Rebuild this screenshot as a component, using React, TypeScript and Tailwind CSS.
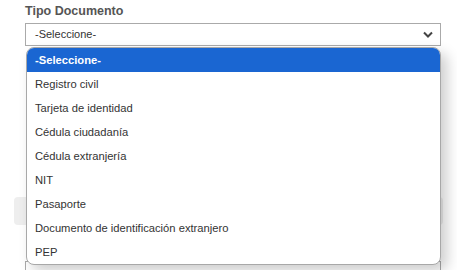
import React from "react";

const options = [
  "-Seleccione-",
  "Registro civil",
  "Tarjeta de identidad",
  "Cédula ciudadanía",
  "Cédula extranjería",
  "NIT",
  "Pasaporte",
  "Documento de identificación extranjero",
  "PEP",
];

export default function App() {
  return (
    <div
      className="relative h-[270px] w-[457px] overflow-hidden bg-white"
      style={{ fontFamily: '"Liberation Sans", Arial, sans-serif' }}
    >
      {/* Formulario de fondo */}
      <div className="flex flex-col px-[25px] pt-[2px]">
        <label className="text-[12.5px] font-bold leading-[18px] text-[#555]">Tipo Documento</label>
        <div className="mt-[3px] flex h-[23px] w-[416px] items-center justify-between border border-[#aaa] bg-white pl-[9px] pr-[6px]">
          <span className="text-[11px] text-[#333]">-Seleccione-</span>
          <svg width="10" height="7" viewBox="0 0 10 7" className="mr-[1px]">
            <path d="M1 1.5 L5 5.5 L9 1.5" fill="none" stroke="#444" strokeWidth="2" />
          </svg>
        </div>
        <div className="mt-[30px] h-[27px] w-[416px] border-r border-[#bbb]" />
        <div className="mt-[28px] h-[30px] w-[416px] border-r border-[#bbb]" />
        <div className="-mx-[11px] mt-[36px] h-[28px] rounded-[4px] bg-[#eeeeee]" />
        <div className="mt-[36px] h-[20px] w-[416px] border border-[#aaa]" />
      </div>

      {/* Lista desplegable */}
      <div className="absolute left-[26px] top-[47px] w-[415px] overflow-hidden rounded-[8px] border border-[#a8a8a8] bg-white shadow-[6px_6px_14px_rgba(0,0,0,0.2)]">
        {options.map((o, i) => (
          <div
            key={o}
            className={
              i === 0
                ? "flex h-[24px] items-center bg-[#1a66d2] pl-[8px] text-[11.2px] font-bold text-white"
                : "flex h-[24px] items-center pl-[8px] text-[11.2px] text-[#333]"
            }
          >
            {o}
          </div>
        ))}
      </div>
    </div>
  );
}
